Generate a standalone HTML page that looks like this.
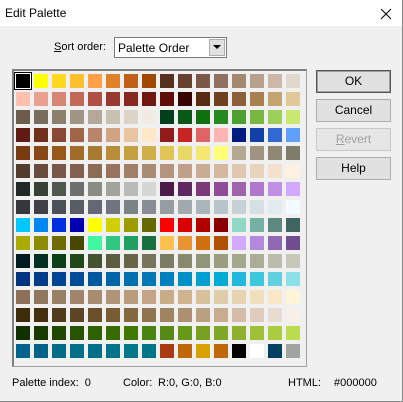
<!DOCTYPE html>
<html><head><meta charset="utf-8"><style>
*{margin:0;padding:0;box-sizing:border-box}
body{width:403px;height:402px;background:#f0f0f0;font-family:"Liberation Sans",sans-serif;font-size:11px;color:#000;position:relative;overflow:hidden}
.abs{position:absolute}
#title{left:0;top:0;width:402px;height:26px;background:#fff}
#win{left:0;top:0;width:403px;height:402px;border-right:1px solid #888;border-bottom:1px solid #888}
.btn{position:absolute;left:316px;width:75px;height:23px;background:#e1e1e1;border:1px solid #adadad;text-align:center;line-height:21px;font-size:12px}
#grid{position:absolute;left:16px;top:74px;display:grid;grid-template-columns:repeat(16,14px);grid-auto-rows:14px;gap:4px}
#grid i{display:block;width:14px;height:14px}
</style></head><body>
<div id="win" class="abs"></div>
<div id="title" class="abs"></div>
<div class="abs" style="left:5px;top:6px;font-size:12px">Edit Palette</div>
<svg class="abs" style="left:380px;top:8px" width="12" height="12"><path d="M1 1L11 11M11 1L1 11" stroke="#000" stroke-width="1"/></svg>
<div class="abs" style="left:54px;top:41px;font-size:11px"><u>S</u>ort order:</div>
<div class="abs" style="left:114px;top:37px;width:113px;height:21px;background:#fff;border:1px solid #7a7a7a"></div>
<div class="abs" style="left:118px;top:41px;font-size:12px">Palette Order</div>
<div class="abs" style="left:209px;top:39px;width:16px;height:17px;background:#e1e1e1;border:1px solid #adadad"></div>
<svg class="abs" style="left:213px;top:45px" width="9" height="5"><path d="M0 0H8L4 4Z" fill="#000"/></svg>
<div class="abs" style="left:12px;top:69px;width:295px;height:298px;border:1px solid #a0a0a0;border-left:2px solid #808080;border-top:2px solid #808080"></div>
<div class="abs" style="left:14px;top:72px;width:18px;height:18px;border:1px solid #000;background:#fff"></div>
<div id="grid">
<i style="background:#000000"></i><i style="background:#FFFF00"></i><i style="background:#FFD820"></i><i style="background:#FFC030"></i><i style="background:#FFA048"></i><i style="background:#E08028"></i><i style="background:#C06018"></i><i style="background:#A04800"></i><i style="background:#583020"></i><i style="background:#684030"></i><i style="background:#7C5848"></i><i style="background:#907060"></i><i style="background:#A48870"></i><i style="background:#B8A08C"></i><i style="background:#CCB8A8"></i><i style="background:#E0D8CC"></i>
<i style="background:#FFC0B0"></i><i style="background:#E8A090"></i><i style="background:#D88474"></i><i style="background:#C46858"></i><i style="background:#B05044"></i><i style="background:#983830"></i><i style="background:#882820"></i><i style="background:#701810"></i><i style="background:#600C08"></i><i style="background:#380400"></i><i style="background:#582C10"></i><i style="background:#704020"></i><i style="background:#8C6038"></i><i style="background:#A88050"></i><i style="background:#C4A470"></i><i style="background:#E0C898"></i>
<i style="background:#6C5C4C"></i><i style="background:#786C5C"></i><i style="background:#8C806C"></i><i style="background:#A09484"></i><i style="background:#B4A898"></i><i style="background:#C8C0B0"></i><i style="background:#DCD4C8"></i><i style="background:#F0ECE4"></i><i style="background:#00401C"></i><i style="background:#085818"></i><i style="background:#107010"></i><i style="background:#288820"></i><i style="background:#4CA030"></i><i style="background:#78B840"></i><i style="background:#9CD058"></i><i style="background:#C8E870"></i>
<i style="background:#601C14"></i><i style="background:#70301C"></i><i style="background:#884834"></i><i style="background:#A06448"></i><i style="background:#B8846C"></i><i style="background:#D0A484"></i><i style="background:#E8C4A0"></i><i style="background:#FFE8C8"></i><i style="background:#901C1C"></i><i style="background:#C82424"></i><i style="background:#E06464"></i><i style="background:#FFB4B4"></i><i style="background:#001C80"></i><i style="background:#1040A8"></i><i style="background:#3068D4"></i><i style="background:#60A0FF"></i>
<i style="background:#783C10"></i><i style="background:#884818"></i><i style="background:#98581C"></i><i style="background:#A06C28"></i><i style="background:#A87C30"></i><i style="background:#B88C38"></i><i style="background:#C4A040"></i><i style="background:#D0B048"></i><i style="background:#E0C458"></i><i style="background:#E8D868"></i><i style="background:#F4E870"></i><i style="background:#FFFF78"></i><i style="background:#B4A890"></i><i style="background:#A09480"></i><i style="background:#908874"></i><i style="background:#807C6C"></i>
<i style="background:#543C2C"></i><i style="background:#684C3C"></i><i style="background:#785848"></i><i style="background:#846050"></i><i style="background:#8C6C54"></i><i style="background:#987460"></i><i style="background:#A08068"></i><i style="background:#A88C74"></i><i style="background:#B4947C"></i><i style="background:#C0A088"></i><i style="background:#C8AC94"></i><i style="background:#D4B8A0"></i><i style="background:#E0C8B0"></i><i style="background:#E8D4BC"></i><i style="background:#F4E0CC"></i><i style="background:#FFF0E0"></i>
<i style="background:#202828"></i><i style="background:#384038"></i><i style="background:#505850"></i><i style="background:#6C706C"></i><i style="background:#888C84"></i><i style="background:#A0A49C"></i><i style="background:#B8BCB8"></i><i style="background:#D4D8D4"></i><i style="background:#4C1C48"></i><i style="background:#602860"></i><i style="background:#7C3878"></i><i style="background:#904C98"></i><i style="background:#A064AC"></i><i style="background:#B078CC"></i><i style="background:#C090E4"></i><i style="background:#D4A8FF"></i>
<i style="background:#34383C"></i><i style="background:#404048"></i><i style="background:#4C5058"></i><i style="background:#585C64"></i><i style="background:#646874"></i><i style="background:#707480"></i><i style="background:#7C8488"></i><i style="background:#888C94"></i><i style="background:#949CA4"></i><i style="background:#A0A8B0"></i><i style="background:#ACB4BC"></i><i style="background:#B8C4CC"></i><i style="background:#C8D0D8"></i><i style="background:#D4E0E4"></i><i style="background:#E0ECF0"></i><i style="background:#F0FCFF"></i>
<i style="background:#00C8FF"></i><i style="background:#0088F0"></i><i style="background:#0030E0"></i><i style="background:#0000B0"></i><i style="background:#FFFF00"></i><i style="background:#D0D000"></i><i style="background:#9C9C00"></i><i style="background:#686800"></i><i style="background:#FF0000"></i><i style="background:#D80000"></i><i style="background:#B00000"></i><i style="background:#880000"></i><i style="background:#90D8C4"></i><i style="background:#74B0A4"></i><i style="background:#5C8880"></i><i style="background:#406460"></i>
<i style="background:#ACAC00"></i><i style="background:#8C8C00"></i><i style="background:#706C00"></i><i style="background:#484800"></i><i style="background:#40F8A0"></i><i style="background:#30C880"></i><i style="background:#20A060"></i><i style="background:#187040"></i><i style="background:#FFC050"></i><i style="background:#E89430"></i><i style="background:#D07010"></i><i style="background:#B05000"></i><i style="background:#D4A8FF"></i><i style="background:#B488DC"></i><i style="background:#9068B4"></i><i style="background:#704C90"></i>
<i style="background:#001C20"></i><i style="background:#043024"></i><i style="background:#0C4018"></i><i style="background:#204818"></i><i style="background:#445430"></i><i style="background:#5C5C40"></i><i style="background:#686448"></i><i style="background:#78745C"></i><i style="background:#7C7C64"></i><i style="background:#88886C"></i><i style="background:#909478"></i><i style="background:#9C9C80"></i><i style="background:#A4A88C"></i><i style="background:#ACAC98"></i><i style="background:#BCBCAC"></i><i style="background:#C8C8B8"></i>
<i style="background:#003480"></i><i style="background:#003C88"></i><i style="background:#004494"></i><i style="background:#004C98"></i><i style="background:#0058A0"></i><i style="background:#0064A8"></i><i style="background:#0070B0"></i><i style="background:#0078B8"></i><i style="background:#0080C0"></i><i style="background:#0090C8"></i><i style="background:#00A0D0"></i><i style="background:#00ACD4"></i><i style="background:#20B8DC"></i><i style="background:#3CC8DC"></i><i style="background:#60D0E0"></i><i style="background:#8CE0E8"></i>
<i style="background:#8C7058"></i><i style="background:#907860"></i><i style="background:#988064"></i><i style="background:#A0846C"></i><i style="background:#A88C70"></i><i style="background:#B09478"></i><i style="background:#B89C7C"></i><i style="background:#C4A484"></i><i style="background:#C8AC88"></i><i style="background:#D0B490"></i><i style="background:#D8C09C"></i><i style="background:#E0CCA8"></i><i style="background:#E8D4B0"></i><i style="background:#F0E0BC"></i><i style="background:#F8E8C8"></i><i style="background:#FFF4D8"></i>
<i style="background:#3C2C08"></i><i style="background:#443010"></i><i style="background:#503C1C"></i><i style="background:#5C4424"></i><i style="background:#6C502C"></i><i style="background:#785C34"></i><i style="background:#846840"></i><i style="background:#907450"></i><i style="background:#A08460"></i><i style="background:#AC9070"></i><i style="background:#B8A080"></i><i style="background:#C8AC90"></i><i style="background:#D4BCA8"></i><i style="background:#E0CCBC"></i><i style="background:#E8DCD0"></i><i style="background:#F8F0E8"></i>
<i style="background:#103000"></i><i style="background:#183C00"></i><i style="background:#204800"></i><i style="background:#285400"></i><i style="background:#306000"></i><i style="background:#386C00"></i><i style="background:#407800"></i><i style="background:#488410"></i><i style="background:#588818"></i><i style="background:#689818"></i><i style="background:#78A020"></i><i style="background:#80A828"></i><i style="background:#90B030"></i><i style="background:#A0C038"></i><i style="background:#ACCC40"></i><i style="background:#BCDC50"></i>
<i style="background:#00648C"></i><i style="background:#006488"></i><i style="background:#006C88"></i><i style="background:#007088"></i><i style="background:#007088"></i><i style="background:#007488"></i><i style="background:#00788C"></i><i style="background:#007488"></i><i style="background:#A83C10"></i><i style="background:#C06808"></i><i style="background:#D8A000"></i><i style="background:#C06808"></i><i style="background:#000000"></i><i style="background:#FFFFFF"></i><i style="background:#004060"></i><i style="background:#A0A4A0"></i>
</div>
<div class="btn" style="top:70px;border:1px solid #555;box-shadow:inset 0 0 0 1px #a0a0a0">OK</div>
<div class="btn" style="top:99px">Cancel</div>
<div class="btn" style="top:128px;color:#a0a0a0;background:#e6e6e6;border-color:#c8c8c8"><u>R</u>evert</div>
<div class="btn" style="top:157px">Help</div>
<div class="abs" style="left:12px;top:377px">Palette index:&nbsp; 0</div>
<div class="abs" style="left:123px;top:377px">Color:</div>
<div class="abs" style="left:158px;top:377px">R:0, G:0, B:0</div>
<div class="abs" style="left:288px;top:377px">HTML:</div>
<div class="abs" style="left:334px;top:377px">#000000</div>
</body></html>
